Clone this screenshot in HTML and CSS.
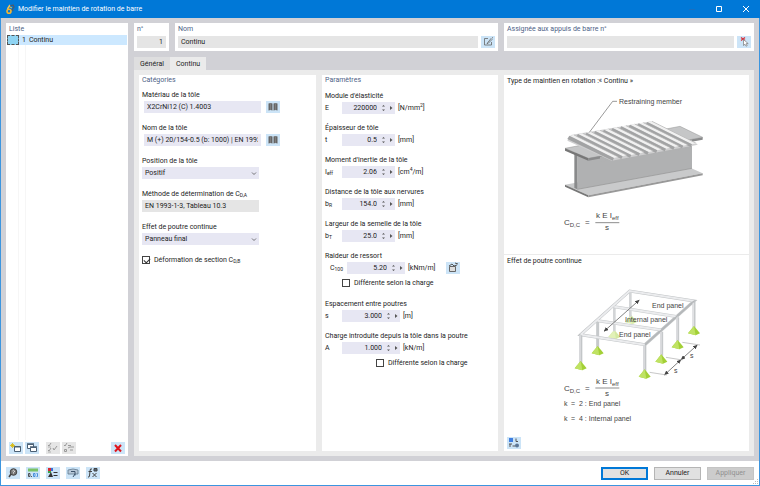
FILE: index.html
```html
<!DOCTYPE html>
<html lang="fr">
<head>
  <meta charset="UTF-8">
  <meta name="viewport" content="width=device-width, initial-scale=1.0">
  <title>Modifier le maintien de rotation de barre</title>
  <link rel="stylesheet" href="styles.css">
</head>
<body>
<div class="window">
  <!-- Title bar -->
  <header class="titlebar">
    <svg class="app-icon" width="9" height="11" viewBox="0 0 9 11"><path d="M4 1 1.500 5" stroke="#f5c451" stroke-width="1.500"/><circle cx="3" cy="7.200" r="2" fill="none" stroke="#f5b52e" stroke-width="1.600"/><path d="M4 2l3-1 1 2-2 3M6 5l1 2" fill="none" stroke="#4c5b6b" stroke-width="1.300"/><path d="M4 3l2 1" stroke="#f5c451"/></svg>
    <h1>Modifier le maintien de rotation de barre</h1>
    <div class="window-buttons">
      <button type="button" aria-label="Réduire"><svg width="8" height="8"><path d="M1 4.500h6" stroke="#1a6fc0"/></svg></button>
      <button type="button" aria-label="Agrandir"><svg width="8" height="8"><path d="M1.500 1.500h5v5h-5z" fill="none" stroke="#fff"/></svg></button>
      <button type="button" aria-label="Fermer"><svg width="8" height="8"><path d="M1 1l6 6M7 1l-6 6" stroke="#fff"/></svg></button>
    </div>
  </header>

  <div class="workspace">
    <!-- List -->
    <aside class="list-panel">
      <h2>Liste</h2>
      <ul class="list">
        <li class="selected"><span class="swatch"></span><span>1</span><span>Continu</span></li>
      </ul>
      <div class="list-grid"></div>
      <div class="list-tools">
        <button type="button" class="tool" aria-label="Nouveau"><svg width="14" height="12"><path d="M5.500 4.500h6v5h-6z" fill="#fff" stroke="#4b6075"/><path d="M5 5h7" stroke="#4b6075"/><path d="M3.500 1v5M1 3.500h5M2 2l3 3M5 2l-3 3" stroke="#d9b800" stroke-width=".8"/></svg></button>
        <button type="button" class="tool" aria-label="Copier"><svg width="14" height="12"><path d="M2.500 2.500h6v4h-6z" fill="#fff" stroke="#4b6075"/><path d="M2 2h7M5 5h7" stroke="#4b6075" stroke-width="1.500"/><path d="M5.500 5.500h6v4h-6z" fill="#fff" stroke="#4b6075"/></svg></button>
        <button type="button" class="tool off spaced" aria-label="Tout cocher"><svg width="14" height="12" fill="none" stroke="#999"><path d="M2 3l1 1 2-3M2 8l1 1 2-3M7 6l1 2 3-4"/><path d="M2 5h3M2 10h3" stroke-width=".7"/></svg></button>
        <button type="button" class="tool off" aria-label="Inverser"><svg width="14" height="12" fill="none" stroke="#999"><path d="M2 3l1 1 2-3M6 3.500h3M2.500 7.500h2v2h-2zM6 6l2-1h4M8 8h3"/></svg></button>
        <button type="button" class="tool delete" aria-label="Supprimer"><svg width="14" height="12"><path d="M4 3l6 6.500M10 3l-6 6.500" stroke="#e0141b" stroke-width="2"/></svg></button>
      </div>
    </aside>

    <main class="editor">
      <div class="top-row">
        <div class="box">
          <label for="number">n°</label>
          <div class="box-line"><input id="number" class="right" type="text" value="1" readonly></div>
        </div>
        <div class="box">
          <label for="name">Nom</label>
          <div class="box-line">
            <input id="name" type="text" value="Continu" readonly>
            <button type="button" class="tool" aria-label="Modifier le nom"><svg width="14" height="12" fill="none" stroke="#666"><path d="M7 2.500H3.500v6.500h7V6M6 7.500l4-5 1 1-4 4z" stroke-width=".8"/><path d="M11 2l1-.5" stroke="#777"/></svg></button>
          </div>
        </div>
        <div class="box">
          <label for="assigned">Assignée aux appuis de barre n°</label>
          <div class="box-line">
            <input id="assigned" type="text" value="" readonly>
            <button type="button" class="tool" aria-label="Sélectionner"><svg width="14" height="12"><path d="M4 1.500l4 3M8 1.500l-4 3" stroke="#d8343f" stroke-width="1.300"/><path d="M6.500 3.500v6l1.500-1.300 1 2 1.200-.6-1-2h2z" fill="#fff" stroke="#777" stroke-width=".7"/></svg></button>
          </div>
        </div>
      </div>

      <nav class="tabs">
        <button type="button">Général</button>
        <button type="button" class="active">Continu</button>
      </nav>

      <div class="tab-page">
        <!-- Categories -->
        <section class="panel">
          <h2>Catégories</h2>
          <div class="category">
            <label for="material">Matériau de la tôle</label>
            <div class="library">
              <input id="material" type="text" value="X2CrNi12 (C) 1.4003">
              <button type="button" class="tool" aria-label="Bibliothèque de matériaux"><svg width="14" height="12" fill="#666"><path d="M2.500 2.500q2-1 4 0v7q-2-1-4 0zM7.500 2.500q2-1 4 0v7q-2-1-4 0z"/><path d="M4.500 2v7M9.500 2v7" stroke="#888" stroke-width=".7"/></svg></button>
            </div>
          </div>
          <div class="category">
            <label for="sheet">Nom de la tôle</label>
            <div class="library">
              <input id="sheet" type="text" value="M (+) 20/154-0.5 (b: 1000) | EN 1993-1-3">
              <button type="button" class="tool" aria-label="Bibliothèque de tôles"><svg width="14" height="12" fill="#666"><path d="M2.500 2.500q2-1 4 0v7q-2-1-4 0zM7.500 2.500q2-1 4 0v7q-2-1-4 0z"/><path d="M4.500 2v7M9.500 2v7" stroke="#888" stroke-width=".7"/></svg></button>
            </div>
          </div>
          <div class="category">
            <label for="position">Position de la tôle</label>
            <div class="select">
              <select id="position"><option>Positif</option></select>
              <svg width="6" height="4"><path d="M1 .5l2 2 2-2" fill="none" stroke="#555" stroke-width=".8"/></svg>
            </div>
          </div>
          <div class="category">
            <label for="method">Méthode de détermination de C<sub>D,A</sub></label>
            <input id="method" class="gray" type="text" value="EN 1993-1-3, Tableau 10.3" readonly>
          </div>
          <div class="category">
            <label for="effect">Effet de poutre continue</label>
            <div class="select">
              <select id="effect"><option>Panneau final</option></select>
              <svg width="6" height="4"><path d="M1 .5l2 2 2-2" fill="none" stroke="#555" stroke-width=".8"/></svg>
            </div>
          </div>
          <label class="check"><input type="checkbox" checked><span>Déformation de section C<sub>D,B</sub></span></label>
        </section>

        <!-- Parameters -->
        <section class="panel params">
          <h2>Paramètres</h2>
          <div class="param">
            <label for="p-e">Module d'élasticité</label>
            <div class="param-line">
              <span class="symbol">E</span>
              <div class="spin"><input id="p-e" type="text" value="220000"><button type="button" aria-label="Ajuster"><svg width="14" height="8"><path d="M1 2.500l1.500-1.500 1.500 1.500zM1 5.500l1.500 1.500 1.500-1.500zM9 2v4l2.500-2z"/></svg></button></div>
              <span>[N/mm<sup>2</sup>]</span>
            </div>
          </div>
          <div class="param">
            <label for="p-t">Épaisseur de tôle</label>
            <div class="param-line">
              <span class="symbol">t</span>
              <div class="spin"><input id="p-t" type="text" value="0.5"><button type="button" aria-label="Ajuster"><svg width="14" height="8"><path d="M1 2.500l1.500-1.500 1.500 1.500zM1 5.500l1.500 1.500 1.500-1.500zM9 2v4l2.500-2z"/></svg></button></div>
              <span>[mm]</span>
            </div>
          </div>
          <div class="param">
            <label for="p-i">Moment d'inertie de la tôle</label>
            <div class="param-line">
              <span class="symbol">I<sub>eff</sub></span>
              <div class="spin"><input id="p-i" type="text" value="2.06"><button type="button" aria-label="Ajuster"><svg width="14" height="8"><path d="M1 2.500l1.500-1.500 1.500 1.500zM1 5.500l1.500 1.500 1.500-1.500zM9 2v4l2.500-2z"/></svg></button></div>
              <span>[cm<sup>4</sup>/m]</span>
            </div>
          </div>
          <div class="param">
            <label for="p-br">Distance de la tôle aux nervures</label>
            <div class="param-line">
              <span class="symbol">b<sub>R</sub></span>
              <div class="spin"><input id="p-br" type="text" value="154.0"><button type="button" aria-label="Ajuster"><svg width="14" height="8"><path d="M1 2.500l1.500-1.500 1.500 1.500zM1 5.500l1.500 1.500 1.500-1.500zM9 2v4l2.500-2z"/></svg></button></div>
              <span>[mm]</span>
            </div>
          </div>
          <div class="param">
            <label for="p-bt">Largeur de la semelle de la tôle</label>
            <div class="param-line">
              <span class="symbol">b<sub>T</sub></span>
              <div class="spin"><input id="p-bt" type="text" value="25.0"><button type="button" aria-label="Ajuster"><svg width="14" height="8"><path d="M1 2.500l1.500-1.500 1.500 1.500zM1 5.500l1.500 1.500 1.500-1.500zM9 2v4l2.500-2z"/></svg></button></div>
              <span>[mm]</span>
            </div>
          </div>
          <div class="param">
            <label for="p-c">Raideur de ressort</label>
            <div class="param-line indent">
              <span class="symbol">C<sub>100</sub></span>
              <div class="spin large"><input id="p-c" type="text" value="5.20"><button type="button" aria-label="Ajuster"><svg width="14" height="8"><path d="M1 2.500l1.500-1.500 1.500 1.500zM1 5.500l1.500 1.500 1.500-1.500zM9 2v4l2.500-2z"/></svg></button></div>
              <span class="unit">[kNm/m]</span>
              <button type="button" class="tool" aria-label="Options"><svg width="14" height="12"><path d="M3.500 4.500h6v5h-6z" fill="#ddd" stroke="#666"/><path d="M3 4l3-2 2 2 3-1M9 1l3 1" fill="none" stroke="#555"/></svg></button>
            </div>
            <label class="check"><input type="checkbox"><span>Différente selon la charge</span></label>
          </div>
          <div class="param">
            <label for="p-s">Espacement entre poutres</label>
            <div class="param-line">
              <span class="symbol">s</span>
              <div class="spin large"><input id="p-s" type="text" value="3.000"><button type="button" aria-label="Ajuster"><svg width="14" height="8"><path d="M1 2.500l1.500-1.500 1.500 1.500zM1 5.500l1.500 1.500 1.500-1.500zM9 2v4l2.500-2z"/></svg></button></div>
              <span>[m]</span>
            </div>
          </div>
          <div class="param">
            <label for="p-a">Charge introduite depuis la tôle dans la poutre</label>
            <div class="param-line">
              <span class="symbol">A</span>
              <div class="spin large"><input id="p-a" type="text" value="1.000"><button type="button" aria-label="Ajuster"><svg width="14" height="8"><path d="M1 2.500l1.500-1.500 1.500 1.500zM1 5.500l1.500 1.500 1.500-1.500zM9 2v4l2.500-2z"/></svg></button></div>
              <span>[kN/m]</span>
            </div>
            <label class="check deep"><input type="checkbox"><span>Différente selon la charge</span></label>
          </div>
        </section>

        <!-- Drawings -->
        <section class="drawings">
          <figure>
            <figcaption>Type de maintien en rotation :« Continu »</figcaption>
            <svg class="drawing" width="153" height="145">
              <svg width="153" height="145" viewBox="150 60 459 435">
                <defs>
                  <g id="rib">
                    <path d="M0 0 14-2 147 64 134 67z" fill="#f1f1f1"/>
                    <path d="M0 0 134 67 130 75-6 10z" fill="#a2a3a4"/>
                    <path d="M14-2 147 64" stroke="#b0b0b0" stroke-width="2"/>
                  </g>
                </defs>
                <path d="M195 344 265 376 608 310 540 280z" fill="#c9cacb"/>
                <path d="M195 344 265 376v6L195 350z" fill="#777"/>
                <path d="M265 376 608 310v6L265 382z" fill="#999"/>
                <path d="M232 250 576 215V295L232 358z" fill="#b0b1b2"/>
                <path d="M232 358 576 295" stroke="#929292" stroke-width="2"/>
                <path d="M223 248h9v110l-9-4z" fill="#898a8b"/>
                <path d="M195 235 265 265 608 202 540 169z" fill="#c5c6c7" stroke="#999" stroke-width="1.500"/>
                <path d="M195 235 265 265v7L195 242z" fill="#777"/>
                <path d="M265 265 608 202v7L265 272z" fill="#8a8b8c"/>
                <path d="M300 260 576 209v25L300 275z" fill="#b0b1b2"/>
                <path d="M202 212 335 272 594 224 455 154 213 195z" fill="#cfcfd0"/>
                <use href="#rib" x="442" y="156"/><use href="#rib" x="416" y="160"/>
                <use href="#rib" x="390" y="164"/><use href="#rib" x="364" y="169"/>
                <use href="#rib" x="338" y="174"/><use href="#rib" x="312" y="179"/>
                <use href="#rib" x="286" y="183"/><use href="#rib" x="260" y="188"/>
                <use href="#rib" x="234" y="192"/><use href="#rib" x="208" y="197"/>
                <path d="M351 94h-13L268 187" fill="none" stroke="#666" stroke-width="2"/>
                <path d="M286 458h72" stroke="#555" stroke-width="2"/>
              </svg>
              <text x="69" y="14">Restraining member</text>
              <text class="math" x="14" y="135">C<tspan class="index" dy="2">D,C</tspan></text>
              <text class="math" x="35" y="135">=</text>
              <text class="math" x="46" y="128">k E I<tspan class="index" dy="2">eff</tspan></text>
              <text class="math" x="55" y="140">s</text>
            </svg>
          </figure>
          <figure>
            <figcaption>Effet de poutre continue</figcaption>
            <svg class="drawing" width="153" height="140">
              <svg width="153" height="140" viewBox="150 105 459 420">
                <defs>
                  <g id="support">
                    <path d="M0-13 18 9 5 15-18 9z" fill="#a3d036"/>
                    <path d="M0-13 5 15-18 9z" fill="#bfe263"/>
                  </g>
                  <marker id="arrow" markerUnits="userSpaceOnUse" markerWidth="14" markerHeight="12" refX="13" refY="6" orient="auto-start-reverse"><path d="M0 0 14 6 0 12z" fill="#444"/></marker>
                </defs>
                <g opacity=".45"><use href="#support" x="393" y="207"/><use href="#support" x="343" y="252"/></g>
                <g stroke="#d3d5d7" stroke-width="8"><path d="M391 128v72M343 172v72"/></g>
                <g fill="none" stroke="#c6c9cb" stroke-width="9"><path d="M293 214v80M343 170 533 200M293 212 484 240M485 245v72M533 202v72M582 155v80"/></g>
                <path d="M242 254 389 123 582 153 435 284z" fill="none" stroke="#bfc2c4" stroke-width="9"/>
                <path d="M242 254 389 123 582 153M343 170 533 200M293 212 484 240M242 254 435 284" fill="none" stroke="#ebecee" stroke-width="6"/>
                <path d="M435 284 582 153" stroke="#b4b7b9" stroke-width="4"/>
                <path d="M242 256v86M434 286v80" stroke="#c3c6c8" stroke-width="10"/>
                <path d="M240 256v86M432 286v80M483 246v70M531 204v70M580 158v75" stroke="#e1e2e4" stroke-width="4"/>
                <use href="#support" x="242" y="346"/><use href="#support" x="293" y="301"/>
                <use href="#support" x="434" y="371"/><use href="#support" x="484" y="326"/>
                <use href="#support" x="533" y="283"/><use href="#support" x="582" y="241"/>
                <g stroke="#444" stroke-width="2">
                  <path d="M312 244 418 150" marker-start="url(#arrow)" marker-end="url(#arrow)"/>
                  <path d="M493 375 543 329" marker-start="url(#arrow)" marker-end="url(#arrow)"/>
                  <path d="M543 329 592 285" marker-start="url(#arrow)" marker-end="url(#arrow)"/>
                </g>
                <path d="M449 367 500 375M498 322 547 330M547 277 600 285" stroke="#aaa" stroke-width="2"/>
                <path d="M286 414h72" stroke="#555" stroke-width="2"/>
              </svg>
              <text x="102" y="23">End panel</text>
              <text x="75" y="37">Internal panel</text>
              <text x="69" y="52">End panel</text>
              <text x="140" y="73">s</text>
              <text x="124" y="88">s</text>
              <text class="math" x="14" y="106">C<tspan class="index" dy="2">D,C</tspan></text>
              <text class="math" x="35" y="106">=</text>
              <text class="math" x="46" y="99">k E I<tspan class="index" dy="2">eff</tspan></text>
              <text class="math" x="55" y="111">s</text>
              <text x="14" y="121">k</text><text x="21" y="121">=</text><text x="29" y="121">2 : End panel</text>
              <text x="14" y="136">k</text><text x="21" y="136">=</text><text x="29" y="136">4 : Internal panel</text>
            </svg>
            <button type="button" class="tool" aria-label="Vue"><svg width="14" height="12"><path d="M2 1h4v4H2z" fill="#3f7ee0"/><path d="M9 1.500v3h2M3 7v3M2 7h3M5.500 9h3" fill="none" stroke="#555"/><circle cx="10" cy="8.500" r="2" fill="#5b7696"/></svg></button>
          </figure>
        </section>
      </div>
    </main>
  </div>

  <!-- Footer -->
  <footer class="footer">
    <button type="button" class="tool" aria-label="Aide"><svg width="14" height="12"><circle cx="7.500" cy="5" r="3.300" fill="#777" stroke="#444"/><path d="M6.500 4q1-1.500 2 0 0 1-1 1.500v1" fill="none" stroke="#fff" stroke-width=".8"/><path d="M5 7l-2 3" stroke="#444" stroke-width="1.500"/></svg></button>
    <button type="button" class="tool" aria-label="Unités"><svg width="14" height="12"><path d="M2 1.500h10v3H2z" fill="#79c267"/><path d="M2.500 6.500h1.500v3H2.500zM5 9.500h1" fill="none" stroke="#444" stroke-width=".9"/><path d="M7.500 6.500h1.500v3H7.500zM10.500 6.500h1v3h-1" fill="none" stroke="#3a86d8" stroke-width=".9"/></svg></button>
    <button type="button" class="tool" aria-label="Affichage"><svg width="14" height="12"><path d="M2 1h3v3H2z" fill="#dc2830"/><path d="M5 1h2v3H5z" fill="#3b71d8"/><path d="M2 4h3v2H2z" fill="#3da34a"/><path d="M2 10l3-5 2 5z" fill="#333"/><path d="M7.500 5.500h4M7.500 8.500h4" stroke="#333"/></svg></button>
    <button type="button" class="tool" aria-label="Exporter"><svg width="14" height="12"><path d="M2 3q5-2 10 0v4H2z" fill="#b8c9d9" stroke="#61788e" stroke-width=".8"/><path d="M5 4.500h4v4M7 10l2-3" fill="none" stroke="#3d536b"/></svg></button>
    <button type="button" class="tool" aria-label="Formules"><svg width="14" height="12" fill="none" stroke="#444"><path d="M6 2q-2-1-2 2L3.500 9q-.5 1.500-1.500 1M2.500 4.500h3.500M6.500 6l4 4M10.500 6l-4 4"/><path d="M8 1.500h3v2.500H8z" fill="#567"/></svg></button>
    <div class="actions">
      <button type="button" class="ok">OK</button>
      <button type="button">Annuler</button>
      <button type="button" disabled>Appliquer</button>
    </div>
    <svg class="grip" width="6" height="6" fill="#bbb"><path d="M4 0h1v1H4zM2 2h1v1H2zM4 2h1v1H4zM0 4h1v1H0zM2 4h1v1H2zM4 4h1v1H4z"/></svg>
  </footer>
</div>
</body>
</html>
```

FILE: styles.css
```css
* {
  box-sizing: border-box;
}
body {
  margin: 0;
  font-family: Roboto, "Noto Sans", sans-serif;
  font-size: 7px;
  line-height: 12px;
  color: #1c1c1c;
}
h1, h2, ul, figure {
  margin: 0;
  padding: 0;
}
button, input, select {
  font: inherit;
  color: inherit;
  border: 0;
  border-radius: 0;
  margin: 0;
  padding: 0;
}
svg {
  display: block;
  flex: none;
}
sub, sup {
  font-size: 5px;
  line-height: 0;
}
sub {
  vertical-align: -1px;
}

.window {
  min-height: 100vh;
  display: flex;
  flex-direction: column;
  background: #d1d1d6;
  border: 1px solid #3c95df;
  border-top: 0;
}

/* Title bar */
.titlebar {
  display: flex;
  align-items: center;
  height: 18px;
  padding: 0 6px;
  margin: 0 -1px;
  background: #0078d7;
  color: #fff;
}
.titlebar h1 {
  margin-left: 3px;
  font-size: 7px;
  font-weight: normal;
}
.window-buttons {
  display: flex;
  gap: 19px;
  margin-left: auto;
  padding-right: 4px;
}
.window-buttons button {
  background: none;
}

.workspace {
  flex: 1;
  display: flex;
  gap: 6px;
  padding: 5px;
}

h2,
.box > label {
  font-size: 7px;
  font-weight: normal;
  line-height: 10px;
  color: #4d5f86;
}

/* Small icon buttons */
.tool {
  flex: none;
  width: 14px;
  height: 12px;
  background: #cce4f7;
}
.tool.off {
  background: #e6e6e6;
}

/* List */
.list-panel {
  flex: none;
  width: 122px;
  display: flex;
  flex-direction: column;
  background: #fff;
}
.list-panel h2 {
  padding: 1px 3px;
}
.list {
  list-style: none;
  padding: 0 1px;
}
.list li {
  display: flex;
  align-items: center;
  gap: 3px;
  height: 10px;
}
.list .selected {
  background: #cce8ff;
}
.swatch {
  width: 12px;
  height: 10px;
  border: 1px dashed #555;
  background: #8fd4f3;
}
.list-grid {
  flex: 1;
  width: 8px;
  margin-left: 12px;
  border: 1px solid #f6f6f6;
  border-width: 0 1px;
}
.list-tools {
  display: flex;
  gap: 2px;
  padding: 2px 3px;
}
.spaced {
  margin-left: 5px;
}
.delete {
  margin-left: auto;
}

/* Top boxes */
.editor {
  flex: 1;
  min-width: 0;
  display: flex;
  flex-direction: column;
}
.top-row {
  display: grid;
  grid-template-columns: 35px 323fr 250fr;
  gap: 6px;
}
.box {
  padding: 1px 3px 3px;
  background: #fff;
}
.box > label {
  display: block;
  margin-bottom: 2px;
}
.box-line {
  display: flex;
  gap: 3px;
}
.box input {
  flex: 1;
  min-width: 0;
  height: 12px;
  padding: 0 3px;
  background: #e5e5e5;
}
.box .right {
  text-align: right;
}

/* Tabs */
.tabs {
  display: flex;
  margin-top: 6px;
}
.tabs button {
  min-width: 36px;
  height: 13px;
  padding: 0 6px;
  background: #dededf;
}
.tabs .active {
  background: #ebebeb;
}
.tab-page {
  flex: 1;
  display: grid;
  grid-template-columns: 177fr 176fr 245fr;
  gap: 6px;
  padding: 5px;
  background: #ebebeb;
}
.panel {
  padding: 0 3px;
  background: #fff;
}
.panel h2 {
  margin-bottom: 4px;
}
.params h2 {
  margin-bottom: 5px;
}
.panel label {
  display: block;
  white-space: nowrap;
}

/* Categories */
.category {
  margin-bottom: 9px;
}
.category input,
.select select {
  display: block;
  width: 117px;
  height: 12px;
  padding: 0 3px;
  background: #e7e7f3;
}
.library {
  display: flex;
  gap: 5px;
  padding-left: 2px;
}
.category .gray {
  background: #e5e5e5;
}
.select {
  position: relative;
  width: 117px;
}
.select select {
  appearance: none;
}
.select svg {
  position: absolute;
  right: 2px;
  top: 5px;
}
.panel .check {
  display: flex;
  align-items: center;
  gap: 4px;
}
.check input {
  appearance: none;
  width: 8px;
  height: 8px;
  border: 1px solid #444;
  background: #fff;
}
.check input:checked::before {
  content: "";
  display: block;
  width: 5px;
  height: 3px;
  margin: 1px 0 0 1px;
  border: solid #333;
  border-width: 0 0 1px 1px;
  transform: rotate(-45deg);
}

/* Parameters */
.param {
  margin-bottom: 8px;
}
.param-line {
  display: flex;
  gap: 3px;
}
.symbol {
  width: 14px;
}
.indent {
  padding-left: 5px;
}
.spin {
  display: flex;
  align-items: center;
  width: 53px;
  height: 12px;
  background: #e7e7f3;
}
.spin.large {
  width: 58px;
}
.spin input {
  flex: 1;
  min-width: 0;
  background: none;
  text-align: right;
}
.spin button {
  margin-left: 4px;
  background: none;
}
.spin path {
  fill: #555;
}
.unit {
  width: 35px;
}
.panel .param .check {
  margin: 3px 0 9px 17px;
}
.panel .param .deep {
  margin-left: 51px;
}

/* Drawings */
.drawings {
  display: flex;
  flex-direction: column;
  background: #fff;
}
.drawings figure {
  display: flex;
  flex-direction: column;
  padding: 0 3px;
}
.drawings figure:first-child {
  min-height: 180px;
  border-bottom: 1px solid #ebebeb;
}
.drawings figure:last-child {
  flex: 1;
  padding-bottom: 2px;
}
.drawing {
  align-self: center;
  margin-top: 3px;
}
figure:last-child .drawing {
  margin-top: 18px;
}
figure .tool {
  margin-top: auto;
}
.drawing text {
  font-family: "Liberation Sans", Arial, sans-serif;
  font-size: 7px;
  fill: #444;
}
.drawing .math {
  font-size: 8px;
}
.drawing .index {
  font-size: 6px;
}

/* Footer */
.footer {
  position: relative;
  display: flex;
  align-items: center;
  gap: 6px;
  height: 24px;
  padding: 0 5px;
  background: #fff;
}
.actions {
  display: flex;
  gap: 6px;
  margin-left: auto;
}
.actions button {
  width: 47px;
  height: 13px;
  line-height: 11px;
  border: 1px solid #b5b5b5;
  background: #e1e1e1;
}
.actions .ok {
  line-height: 9px;
  border: 2px solid #0078d7;
}
.actions button:disabled {
  background: #ccc;
  border-color: #c4c4c4;
  color: #909090;
}
.grip {
  position: absolute;
  right: 0;
  bottom: 0;
}
```
